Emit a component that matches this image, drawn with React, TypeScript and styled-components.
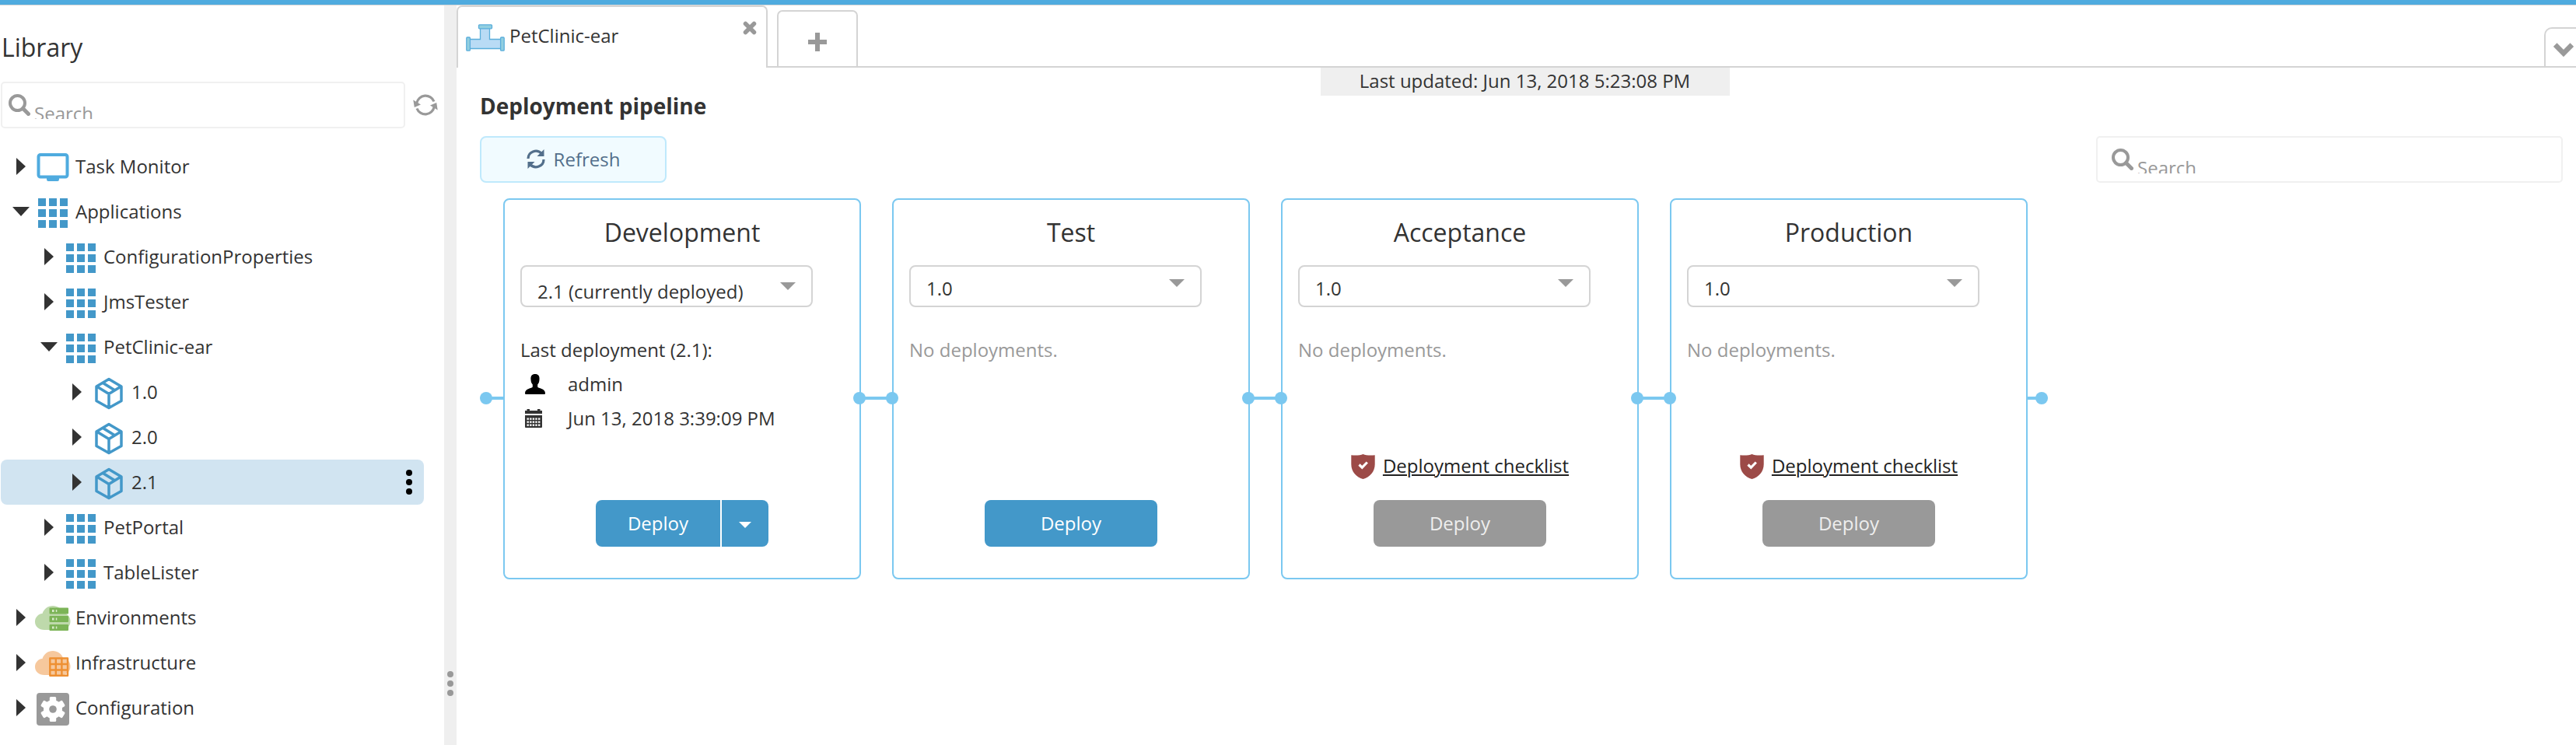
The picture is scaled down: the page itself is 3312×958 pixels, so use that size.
import React from "react";
import styled, { createGlobalStyle, css } from "styled-components";

const GlobalStyle = createGlobalStyle`
  *, *::before, *::after { box-sizing: border-box; }
  html, body { margin: 0; padding: 0; background: #fff; }
  body {
    font-family: "Open Sans", "Noto Sans", sans-serif;
    font-size: 24px;
    color: #333;
    overflow: hidden;
  }
  svg { display: block; flex: none; }
`;

const BLUE = "#4398c9";
const LINE = "#d4d4d4";
const SKY = "#7bc8f0";

const Page = styled.div`
  width: 3312px;
  height: 958px;
  border-top: 6px solid #4fabdf;
  background: #fff;
`;

const Shell = styled.div`
  display: flex;
  height: 952px;
  border-top: 1px solid ${LINE};
`;

/* Library side bar */

const Sidebar = styled.aside`
  width: 571px;
  flex: none;
  padding: 32px 8px 0 1px;
`;

const SidebarTitle = styled.h1`
  margin: 0;
  padding-left: 1px;
  height: 44px;
  line-height: 44px;
  font-size: 32px;
  font-weight: 400;
`;

const SearchRow = styled.div`
  display: flex;
  align-items: center;
  gap: 10px;
  margin-top: 22px;
`;

const SearchBox = styled.div<{ $width: number; $inset: number }>`
  display: flex;
  align-items: flex-start;
  gap: 5px;
  width: ${(p) => p.$width}px;
  height: 60px;
  padding: 14px 0 0 ${(p) => p.$inset}px;
  border: 2px solid #f0f0f0;
  border-radius: 5px;
  color: #999;
`;

const Placeholder = styled.span`
  display: block;
  height: 32px;
  padding-top: 8px;
  overflow: hidden;
  line-height: 33px;
`;

const Tree = styled.ul`
  list-style: none;
  margin: 20px 0 0;
  padding: 0;
`;

const TreeRow = styled.li<{ $depth: number; $selected?: boolean }>`
  display: flex;
  align-items: center;
  width: 544px;
  height: 58px;
  padding: 0 15px 0 ${(p) => 12 + p.$depth * 36}px;
  border-radius: 8px;
  background: ${(p) => (p.$selected ? "#d1e4f1" : "transparent")};
`;

const ArrowSlot = styled.span`
  width: 27px;
  display: flex;
  justify-content: center;
  flex: none;
`;

const IconSlot = styled.span`
  width: 46px;
  height: 46px;
  margin: 4px 6px 0 5px;
  display: flex;
  align-items: center;
  justify-content: center;
  flex: none;
`;

const TreeLabel = styled.span`
  flex: 1;
  height: 35px;
  line-height: 33px;
  white-space: nowrap;
`;

const Dots = styled.span<{ $color: string; $gap: number }>`
  display: flex;
  flex-direction: column;
  gap: ${(p) => p.$gap}px;
  i {
    width: 8px;
    height: 8px;
    border-radius: 50%;
    background: ${(p) => p.$color};
  }
`;

const Splitter = styled.div`
  width: 16px;
  flex: none;
  background: #efefef;
  display: flex;
  flex-direction: column;
  align-items: center;
  padding-top: 856px;
`;

/* Workspace */

const Workspace = styled.main`
  flex: 1;
  min-width: 0;
  display: flex;
  flex-direction: column;
`;

const TabBar = styled.div`
  display: flex;
  align-items: flex-end;
  height: 80px;
  background: linear-gradient(${LINE}, ${LINE}) bottom / 100% 2px no-repeat;
`;

const Tab = styled.div`
  display: flex;
  align-items: flex-start;
  width: 400px;
  height: 80px;
  padding: 22px 12px 0 10px;
  border: 2px solid ${LINE};
  border-bottom: 0;
  border-radius: 7px 7px 0 0;
  background: #fff;
  > :last-child { margin-top: -4px; }
`;

const TabTitle = styled.span`
  flex: 1;
  margin: -2px 0 0 6px;
  line-height: 33px;
`;

const AddTab = styled.button`
  display: flex;
  align-items: center;
  justify-content: center;
  width: 104px;
  height: 74px;
  margin-left: 12px;
  padding: 8px 0 0;
  border: 2px solid ${LINE};
  border-radius: 7px 7px 0 0;
  background: #fff;
`;

const TabMenu = styled.button`
  display: flex;
  align-items: flex-start;
  width: 41px;
  height: 52px;
  margin-left: auto;
  padding: 18px 0 0 10px;
  border: solid ${LINE};
  border-width: 2px 0 2px 2px;
  border-radius: 10px 0 0 0;
  background: #fff;
`;

const UpdatedStrip = styled.div`
  align-self: center;
  width: 526px;
  height: 36px;
  margin-left: 22px;
  background: #efefef;
  text-align: center;
  line-height: 34px;
`;

const Heading = styled.h2`
  margin: -6px 0 0 30px;
  height: 38px;
  line-height: 38px;
  font-size: 28px;
  font-weight: 700;
`;

const Toolbar = styled.div`
  display: flex;
  justify-content: space-between;
  margin-top: 20px;
  padding: 0 17px 0 30px;
`;

const RefreshButton = styled.button`
  display: flex;
  align-items: center;
  justify-content: center;
  gap: 11px;
  width: 240px;
  height: 60px;
  padding: 0 0 2px;
  border: 2px solid #bfe9fc;
  border-radius: 8px;
  background: #f1fbff;
  color: #536f8b;
  font: inherit;
`;

const Pipeline = styled.div`
  display: flex;
  align-items: center;
  margin-top: 20px;
  padding-left: 30px;
`;

const Stage = styled.section`
  display: flex;
  flex-direction: column;
  width: 460px;
  height: 490px;
  padding: 32px 20px 40px;
  border: 2px solid ${SKY};
  border-radius: 8px;
  background: #fff;
`;

const Connector = styled.div<{ $end?: "first" | "last" }>`
  position: relative;
  z-index: 1;
  display: flex;
  align-items: center;
  justify-content: space-between;
  height: 16px;
  margin-top: 24px;
  ${(p) =>
    p.$end === "first"
      ? css`width: 30px;`
      : p.$end === "last"
        ? css`width: 26px; justify-content: flex-end;`
        : css`width: 58px; margin-left: -10px; margin-right: -8px;`}
  &::before {
    content: "";
    position: absolute;
    left: ${(p) => (p.$end === "last" ? 0 : 8)}px;
    right: ${(p) => (p.$end === "first" ? 0 : 8)}px;
    height: 4px;
    background: ${SKY};
  }
  i {
    width: 16px;
    height: 16px;
    border-radius: 50%;
    background: ${SKY};
  }
`;

const StageTitle = styled.h3`
  margin: -12px 0 0;
  height: 44px;
  line-height: 44px;
  font-size: 32px;
  font-weight: 400;
  text-align: center;
`;

const VersionSelect = styled.div<{ $drop: number }>`
  display: flex;
  justify-content: space-between;
  align-items: flex-start;
  width: 376px;
  height: 54px;
  margin-top: 20px;
  padding: ${(p) => 8 + p.$drop}px 20px 0;
  border: 2px solid ${LINE};
  border-radius: 8px;
  line-height: 40px;
  svg { margin-top: 8px; }
`;

const History = styled.div<{ $empty?: boolean }>`
  margin-top: 33px;
  height: 130px;
  line-height: 44px;
  color: ${(p) => (p.$empty ? "#999" : "#333")};
`;

const HistoryLine = styled.div`
  display: flex;
  align-items: center;
  height: 44px;
  padding-left: 6px;
`;

const HistoryIcon = styled.span`
  width: 55px;
`;

const Actions = styled.div`
  margin-top: auto;
  display: flex;
  flex-direction: column;
  align-items: center;
`;

const Checklist = styled.div`
  display: flex;
  align-items: center;
  gap: 10px;
  height: 34px;
  margin-bottom: 26px;
`;

const ChecklistLink = styled.a`
  color: #222;
  height: 34px;
  line-height: 32px;
  text-decoration: underline;
  text-decoration-thickness: 2px;
  text-underline-offset: 2px;
`;

const ButtonGroup = styled.div`
  display: flex;
  gap: 2px;
  width: 222px;
  height: 60px;
  border-radius: 8px;
  overflow: hidden;
`;

const DeployButton = styled.button<{ $disabled?: boolean }>`
  flex: 1;
  padding: 0 0 2px;
  border: 0;
  background: ${(p) => (p.$disabled ? "#999" : BLUE)};
  color: ${(p) => (p.$disabled ? "#eee" : "#fff")};
  font: inherit;
`;

const DeployMenu = styled.button`
  display: flex;
  align-items: center;
  justify-content: center;
  width: 60px;
  padding: 4px 0 0;
  border: 0;
  background: ${BLUE};
`;

/* Icons */

const SearchIcon = () => (
  <svg width="28" height="28" viewBox="0 0 28 28" fill="none" stroke="#999">
    <circle cx="11.5" cy="11.5" r="9.5" strokeWidth="4" />
    <path d="M18.5 18.5 25.5 25.5" strokeWidth="5" strokeLinecap="round" />
  </svg>
);

const ReloadIcon = () => (
  <svg width="32" height="30" viewBox="0 0 32 30" fill="none" stroke="#999" strokeWidth="3.2">
    <path d="M4.8 12.5A11.6 11.6 0 0 1 27 10.5M27.2 17.5A11.6 11.6 0 0 1 5 19.5" />
    <path d="M.3 8.500 10 14.500 1.800 18ZM31.700 21.500 22 15.500 30.200 12Z" fill="#999" stroke="none" />
  </svg>
);

const SyncIcon = () => (
  <svg width="24" height="25" viewBox="0 0 24 25" fill="none" stroke="#536f8b" strokeWidth="3.2">
    <path d="M2 12C2 3 13 -1 19.5 5.5M22 13C22 22 11 26 4.5 19.5" />
    <path d="M22.5 0V9H13.5ZM1.5 25V16H10.5Z" fill="#536f8b" stroke="none" />
  </svg>
);

const ClosedArrow = () => (
  <svg width="12" height="22" viewBox="0 0 12 22"><path d="M0 0 12 11 0 22Z" fill="#333" /></svg>
);

const OpenArrow = () => (
  <svg width="22" height="12" viewBox="0 0 22 12"><path d="M0 0H22L11 12Z" fill="#333" /></svg>
);

const Triangle = ({ width, height, color }: { width: number; height: number; color: string }) => (
  <svg width={width} height={height} viewBox="0 0 20 10" preserveAspectRatio="none">
    <path d="M0 0H20L10 10Z" fill={color} />
  </svg>
);

const MonitorIcon = () => (
  <svg width="42" height="42" viewBox="0 0 42 42">
    <rect x="2.5" y="4" width="37" height="28.500" rx="2.5" fill="#fff" stroke="#4fabdf" strokeWidth="4" />
    <path d="M13 33H29V35.500Q29 38 27 38H15Q13 38 13 35.500Z" fill="#4fabdf" />
  </svg>
);

const GridIcon = () => (
  <svg width="38" height="38" viewBox="0 0 38 38" fill={BLUE}>
    {[0, 14, 28].map((y) => [0, 14, 28].map((x) => <rect key={`${x}-${y}`} x={x} y={y} width="10" height="10" />))}
  </svg>
);

const PackageIcon = () => (
  <svg width="36" height="42" viewBox="0 0 36 42" fill="none" stroke={BLUE} strokeWidth="3.5" strokeLinejoin="round">
    <path d="M18 2.5 34 12V30.5L18 39.5 2 30.5V12ZM2.500 12 18 21.5 33.500 12M18 21.5V39" />
    <path d="M10.500 7.500 25 16.500" strokeWidth="3.800" />
  </svg>
);

const CLOUD = "M12 31C5 31 0 26.5 0 20.5 0 15 4 10.5 9.5 10 11.5 4 16.5 0 23 0 29 0 34 3.5 36 9 42 10 45.5 14.5 45.5 20 45.5 26 41 31 35 31Z";

const EnvironmentIcon = () => (
  <svg width="46" height="34" viewBox="0 0 46 34">
    <path d={CLOUD} fill="#bed9ab" />
    {[2.5, 13, 24].map((y) => (
      <g key={y}>
        <rect x="18.5" y={y} width="24.5" height="8" rx="1" fill="#7cb457" />
        <path d={`M22 ${y + 2.5}h2.5v3h-2.5zM26.8 ${y + 2.5}h1.5v3h-1.5z`} fill="#d8eacb" />
      </g>
    ))}
  </svg>
);

const InfrastructureIcon = () => (
  <svg width="46" height="34" viewBox="0 0 46 34">
    <path d={CLOUD} fill="#f6c89d" />
    <path
      d="M19.3 9.5H42V31.8H19.3ZM26.8 9.5V31.8M34.4 9.5V31.8M19.3 17H42M19.3 24.5H42"
      fill="none"
      stroke="#ee9033"
      strokeWidth="2.4"
      strokeLinejoin="round"
    />
  </svg>
);

const GearIcon = () => (
  <svg width="42" height="42" viewBox="0 0 42 42">
    <rect width="42" height="42" rx="4" fill="#999" />
    <g fill="#fff">
      <circle cx="21" cy="21" r="12" />
      {[0, 60, 120, 180, 240, 300].map((a) => (
        <rect key={a} x="16.800" y="5" width="8.400" height="9" rx="1.5" transform={`rotate(${a} 21 21)`} />
      ))}
    </g>
    <circle cx="21" cy="21" r="4.8" fill="#999" />
  </svg>
);

const PipeIcon = () => (
  <svg width="50" height="35" viewBox="0 0 50 35" strokeWidth="1.3" stroke="#5baedb">
    <path d="M18.5 5V19.5H5V31.5H45V19.5H30.5V5Z" fill="#b9dbf5" />
    <rect x="16.5" y=".8" width="17" height="5" rx="1" fill="#92cfe0" />
    <rect x=".8" y="17" width="4.6" height="17.2" rx="1" fill="#92cfe0" />
    <rect x="44.6" y="17" width="4.6" height="17.2" rx="1" fill="#92cfe0" />
  </svg>
);

const CloseIcon = () => (
  <svg width="18" height="18" viewBox="0 0 18 18" stroke="#999" strokeWidth="5.5" strokeLinecap="round">
    <path d="M3.5 3.5 14.5 14.5M14.5 3.5 3.5 14.5" />
  </svg>
);

const PlusIcon = () => (
  <svg width="24" height="24" viewBox="0 0 24 24" stroke="#999" strokeWidth="6">
    <path d="M12 0V24M0 12H24" />
  </svg>
);

const ChevronIcon = () => (
  <svg width="26" height="18" viewBox="0 0 26 18" fill="none" stroke="#999" strokeWidth="6.5">
    <path d="M2.2 2.5 13 13.5 23.8 2.5" />
  </svg>
);

const UserIcon = () => (
  <svg width="26" height="26" viewBox="0 0 26 26">
    <path d="M13 0C17 0 19 2.5 18.5 7 18.4 10.5 17.5 12 16.2 13.5V16.5C17 18.5 26 18.5 26 24.5 26 25.5 25.5 26 24.5 26H1.5C.5 26 0 25.5 0 24.5 0 18.5 9 18.5 9.8 16.5V13.5C8.5 12 7.6 10.5 7.5 7 7 2.5 9 0 13 0Z" fill="#000" />
  </svg>
);

const CalendarIcon = () => (
  <svg width="22" height="24" viewBox="0 0 22 24">
    <path d="M0 2H2.5V0H6V2H16V0H19.5V2H22V6H0ZM0 8H22V23Q22 24 21 24H1Q0 24 0 23Z" fill="#333" />
    {[11.5, 15.5, 19.5].map((y) =>
      [2.5, 6.1, 9.7, 13.3, 17].map((x) => <rect key={`${x}-${y}`} x={x} y={y} width="2.4" height="2.3" fill="#fff" />)
    )}
  </svg>
);

const ShieldIcon = () => (
  <svg width="31" height="32" viewBox="0 0 31 32">
    <path d="M.3 1.2C6 1.8 12 1.5 15.5 0 19 1.5 25 1.8 30.7 1.2V13C30.7 23 24 29.5 15.5 32 7 29.5 .3 23 .3 13Z" fill="#9c4a47" />
    <path d="M10.5 13.5 14.3 17.2 20.8 10.5" fill="none" stroke="#fff" strokeWidth="3.2" />
  </svg>
);

type Kind = "monitor" | "grid" | "package" | "environment" | "infrastructure" | "gear";

const KIND_ICONS: Record<Kind, () => React.ReactElement> = {
  monitor: MonitorIcon,
  grid: GridIcon,
  package: PackageIcon,
  environment: EnvironmentIcon,
  infrastructure: InfrastructureIcon,
  gear: GearIcon,
};

const NODES: { label: string; kind: Kind; depth: number; open?: boolean; selected?: boolean }[] = [
  { label: "Task Monitor", kind: "monitor", depth: 0 },
  { label: "Applications", kind: "grid", depth: 0, open: true },
  { label: "ConfigurationProperties", kind: "grid", depth: 1 },
  { label: "JmsTester", kind: "grid", depth: 1 },
  { label: "PetClinic-ear", kind: "grid", depth: 1, open: true },
  { label: "1.0", kind: "package", depth: 2 },
  { label: "2.0", kind: "package", depth: 2 },
  { label: "2.1", kind: "package", depth: 2, selected: true },
  { label: "PetPortal", kind: "grid", depth: 1 },
  { label: "TableLister", kind: "grid", depth: 1 },
  { label: "Environments", kind: "environment", depth: 0 },
  { label: "Infrastructure", kind: "infrastructure", depth: 0 },
  { label: "Configuration", kind: "gear", depth: 0 },
];

const STAGES = [
  { name: "Development", version: "2.1 (currently deployed)", deployed: true },
  { name: "Test", version: "1.0" },
  { name: "Acceptance", version: "1.0", checklist: true },
  { name: "Production", version: "1.0", checklist: true },
];

export default function App() {
  return (
    <Page>
      <GlobalStyle />
      <Shell>
        <Sidebar>
          <SidebarTitle>Library</SidebarTitle>
          <SearchRow>
            <SearchBox $width={521} $inset={8}>
              <SearchIcon />
              <Placeholder>Search</Placeholder>
            </SearchBox>
            <ReloadIcon />
          </SearchRow>
          <Tree>
            {NODES.map((n) => {
              const Icon = KIND_ICONS[n.kind];
              return (
                <TreeRow key={n.label} $depth={n.depth} $selected={n.selected}>
                  <ArrowSlot>{n.open ? <OpenArrow /> : <ClosedArrow />}</ArrowSlot>
                  <IconSlot><Icon /></IconSlot>
                  <TreeLabel>{n.label}</TreeLabel>
                  {n.selected && <Dots $color="#000" $gap={4}><i /><i /><i /></Dots>}
                </TreeRow>
              );
            })}
          </Tree>
        </Sidebar>
        <Splitter>
          <Dots $color="#999" $gap={4}><i /><i /><i /></Dots>
        </Splitter>
        <Workspace>
          <TabBar>
            <Tab>
              <PipeIcon />
              <TabTitle>PetClinic-ear</TabTitle>
              <CloseIcon />
            </Tab>
            <AddTab><PlusIcon /></AddTab>
            <TabMenu><ChevronIcon /></TabMenu>
          </TabBar>
          <UpdatedStrip>Last updated: Jun 13, 2018 5:23:08 PM</UpdatedStrip>
          <Heading>Deployment pipeline</Heading>
          <Toolbar>
            <RefreshButton><SyncIcon />Refresh</RefreshButton>
            <SearchBox $width={600} $inset={18}>
              <SearchIcon />
              <Placeholder>Search</Placeholder>
            </SearchBox>
          </Toolbar>
          <Pipeline>
            <Connector $end="first"><i /></Connector>
            {STAGES.map((s, index) => (
              <React.Fragment key={s.name}>
                {index > 0 && <Connector><i /><i /></Connector>}
                <Stage>
                  <StageTitle>{s.name}</StageTitle>
                  <VersionSelect $drop={s.deployed ? 4 : 0}>
                    {s.version}
                    <Triangle width={20} height={10} color="#999" />
                  </VersionSelect>
                  {s.deployed ? (
                    <History>
                      Last deployment (2.1):
                      <HistoryLine><HistoryIcon><UserIcon /></HistoryIcon>admin</HistoryLine>
                      <HistoryLine><HistoryIcon><CalendarIcon /></HistoryIcon>Jun 13, 2018 3:39:09 PM</HistoryLine>
                    </History>
                  ) : (
                    <History $empty>No deployments.</History>
                  )}
                  <Actions>
                    {s.checklist && (
                      <Checklist><ShieldIcon /><ChecklistLink>Deployment checklist</ChecklistLink></Checklist>
                    )}
                    <ButtonGroup>
                      <DeployButton $disabled={s.checklist}>Deploy</DeployButton>
                      {s.deployed && <DeployMenu><Triangle width={16} height={8} color="#fff" /></DeployMenu>}
                    </ButtonGroup>
                  </Actions>
                </Stage>
              </React.Fragment>
            ))}
            <Connector $end="last"><i /></Connector>
          </Pipeline>
        </Workspace>
      </Shell>
    </Page>
  );
}
